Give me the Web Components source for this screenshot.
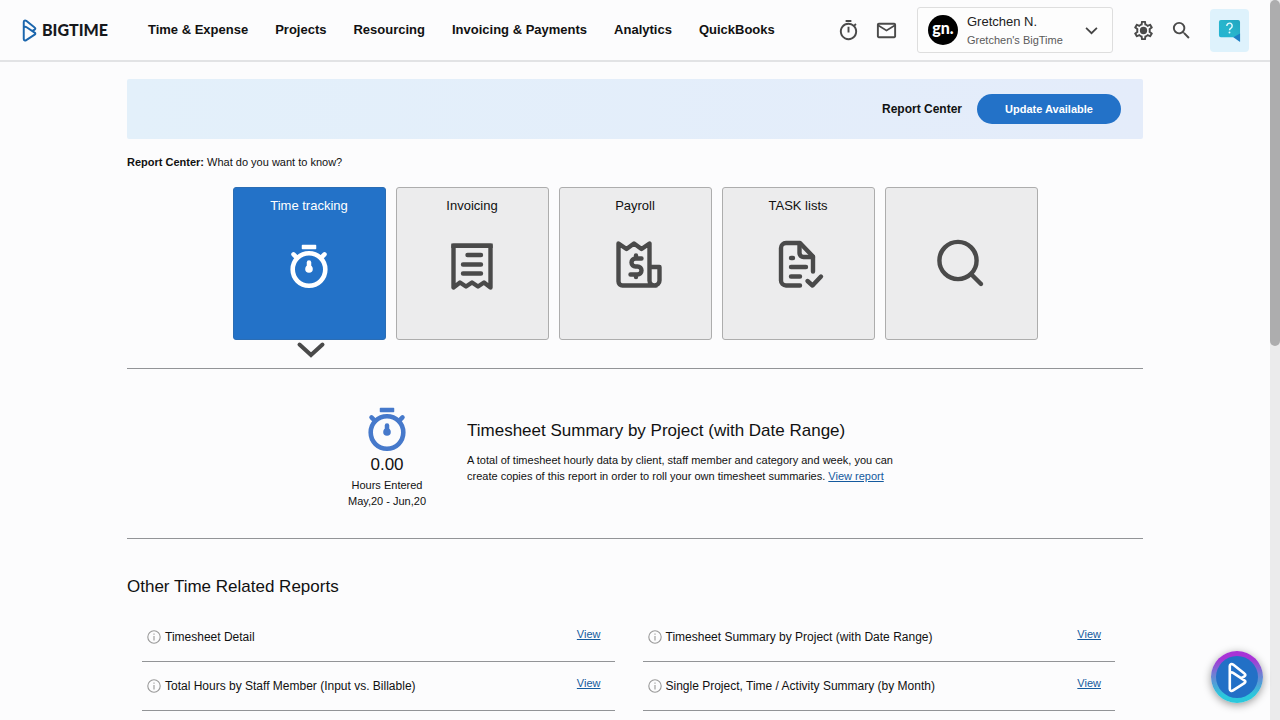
<!DOCTYPE html>
<html lang="en">
<head>
<meta charset="utf-8">
<meta name="viewport" content="width=device-width, initial-scale=1">
<title>BigTime – Report Center</title>
<style>
  body {
    margin: 0;
    font-family: "Liberation Sans", Arial, sans-serif;
    color: #111;
    background: #fcfcfd;
    --blue: #2372c8;
    --link: #145a9e;
    --ink: #4a4a4a;
    --rule: #929497;
  }
</style>
</head>
<body>
<bt-app></bt-app>
<script>
const ICONS = {
  timer: `<svg viewBox="0 0 24 24" fill="currentColor"><path d="M15 1H9v2h6V1zm-4 13h2V8h-2v6zm8.03-6.61 1.42-1.42c-.43-.51-.9-.99-1.41-1.41l-1.42 1.42A8.96 8.96 0 0 0 12 4a9 9 0 1 0 7.03 3.39zM12 20c-3.87 0-7-3.13-7-7s3.13-7 7-7 7 3.13 7 7-3.13 7-7 7z"/></svg>`,
  mail: `<svg viewBox="0 0 24 24" fill="currentColor"><path d="M20 4H4c-1.1 0-2 .9-2 2v12c0 1.1.9 2 2 2h16c1.1 0 2-.9 2-2V6c0-1.1-.9-2-2-2zm0 14H4V8l8 5 8-5v10zm-8-7L4 6h16l-8 5z"/></svg>`,
  gear: `<svg viewBox="0 0 24 24" fill="currentColor"><path d="M19.43 12.98c.04-.32.07-.64.07-.98s-.03-.66-.07-.98l2.11-1.65c.19-.15.24-.42.12-.64l-2-3.46c-.12-.22-.39-.3-.61-.22l-2.49 1c-.52-.4-1.08-.73-1.69-.98l-.38-2.65A.488.488 0 0 0 14 2h-4c-.25 0-.46.18-.49.42l-.38 2.65c-.61.25-1.17.59-1.69.98l-2.49-1c-.23-.09-.49 0-.61.22l-2 3.46c-.13.22-.07.49.12.64l2.11 1.65c-.04.32-.07.65-.07.98s.03.66.07.98l-2.11 1.65c-.19.15-.24.42-.12.64l2 3.46c.12.22.39.3.61.22l2.49-1c.52.4 1.08.73 1.69.98l.38 2.65c.03.24.24.42.49.42h4c.25 0 .46-.18.49-.42l.38-2.65c.61-.25 1.17-.59 1.69-.98l2.49 1c.23.09.49 0 .61-.22l2-3.46c.12-.22.07-.49-.12-.64l-2.11-1.65zm-1.98-1.71c.04.31.05.52.05.73s-.02.43-.05.73l-.14 1.13.89.7 1.08.84-.7 1.21-1.27-.51-1.04-.42-.9.68c-.43.32-.84.56-1.25.73l-1.06.43-.16 1.13-.2 1.35h-1.4l-.19-1.35-.16-1.13-1.06-.43c-.43-.18-.83-.41-1.23-.71l-.91-.7-1.06.43-1.27.51-.7-1.21 1.08-.84.89-.7-.14-1.13c-.03-.31-.05-.54-.05-.74s.02-.43.05-.73l.14-1.13-.89-.7-1.08-.84.7-1.21 1.27.51 1.04.42.9-.68c.43-.32.84-.56 1.25-.73l1.06-.43.16-1.13.2-1.35h1.39l.19 1.35.16 1.13 1.06.43c.43.18.83.41 1.23.71l.91.7 1.06-.43 1.27-.51.7 1.21-1.07.85-.89.7.14 1.13z"/><circle cx="12" cy="12" r="3.8"/></svg>`,
  find: `<svg viewBox="0 0 24 24" fill="currentColor"><path d="M15.5 14h-.79l-.28-.27A6.47 6.47 0 0 0 16 9.5 6.5 6.5 0 1 0 9.5 16c1.61 0 3.09-.59 4.23-1.57l.27.28v.79l5 4.99L20.49 19l-4.99-5zm-6 0C7.01 14 5 11.99 5 9.5S7.01 5 9.5 5 14 7.01 14 9.5 11.99 14 9.5 14z"/></svg>`,
  down: `<svg viewBox="0 0 12 12" fill="none" stroke="currentColor" stroke-width="1.6"><path d="M1 3.5 6 8.5l5-5"/></svg>`,
  help: `<svg viewBox="0 0 24 24"><defs><linearGradient id="h" x1="0" y1="1" x2="1" y2="0"><stop offset="0" stop-color="#20b3d4"/><stop offset=".5" stop-color="#28b5cc"/><stop offset="1" stop-color="#22a5c0"/></linearGradient></defs><path d="M3 1h18a2 2 0 0 1 2 2v20l-5-4H3a2 2 0 0 1-2-2V3a2 2 0 0 1 2-2z" fill="url(#h)"/><path d="M16 19l7-4v9z" fill="#1e7fc4"/><path d="M9.2 7.2a2.8 2.8 0 1 1 4.3 2.3c-1 .6-1.500 1-1.500 2.200" fill="none" stroke="#e8fbff" stroke-width="1.5"/><circle cx="12" cy="14" r="1" fill="#e8fbff"/></svg>`,
  stopwatch: `<svg viewBox="0 0 48 50" fill="none" stroke="currentColor" stroke-linecap="round"><circle cx="24" cy="31.5" r="16.3" stroke-width="4.6"/><path d="M17.500 7.500h13v3h-13z" fill="currentColor" stroke-width="1.500" stroke-linejoin="round"/><path d="m8.500 16.300 3.500 3.500M39.500 16.300 36 19.800" stroke-width="4.500"/><path d="M24 24.500v7" stroke-width="4.500"/><circle cx="24" cy="31" r="3.800" fill="currentColor" stroke="none"/></svg>`,
  invoice: `<svg viewBox="0 0 48 50" fill="none" stroke="currentColor" stroke-width="4.4" stroke-linecap="round" stroke-linejoin="round"><path d="M5.500 49.500V7.800h37v41.700l-6.500-5-6 4-6-4-6 4-6-4-6.500 5z"/><path d="M5.500 10V7.800h37V10" stroke-linejoin="miter" stroke-linecap="butt"/><path d="M19.500 17H33M15 26.500h18M15 35.500h18"/></svg>`,
  payroll: `<svg viewBox="-4 -2 48 50" fill="none" stroke="currentColor" stroke-width="4.4" stroke-linecap="round" stroke-linejoin="round"><path d="M41 45.500H7.500a4 4 0 0 1-4-4V3.500l8 5.500 7.500-5.500L26.500 9l8-5.500v37a5 5 0 0 0 5 5 5 5 0 0 0 5-5V27h-9"/><path d="M26.500 18.500h-6a4 4 0 0 0 0 8h2a4 4 0 0 1 0 8h-7M21 15.500v3M21 34.500V37"/></svg>`,
  tasks: `<svg viewBox="-3 -2 48 50" fill="none" stroke="currentColor" stroke-width="4.4" stroke-linecap="round" stroke-linejoin="round"><path d="M23 45.500H9a5 5 0 0 1-5-5V8a5 5 0 0 1 5-5h14l13 13.500v15"/><path d="M22.500 3.500v9.500a4 4 0 0 0 4 4h9.500"/><path d="M14 18h2M14 27h15M14 36.500h9M30.500 41l5 4.500 8.500-9"/></svg>`,
  search: `<svg viewBox="0 0 48 50" fill="none" stroke="currentColor" stroke-width="4.4" stroke-linecap="round"><circle cx="21" cy="22.5" r="18.6"/><path d="M34.500 36.500 44 46"/></svg>`,
  arrow: `<svg viewBox="0 0 28 16" fill="none" stroke="currentColor" stroke-width="4" stroke-linecap="round"><path d="M2.500 2.500 14 13 25.500 2.500"/></svg>`,
  info: `<svg viewBox="0 0 14 14" fill="none" stroke="currentColor" stroke-width="1.1"><circle cx="7" cy="7" r="6.2"/><path d="M7 6v4.500M7 3.500v1.300"/></svg>`,
  mark: `<svg viewBox="0 0 16 26" fill="none" stroke="currentColor" stroke-width="2.2" stroke-linejoin="round"><path d="M11 13.700l2.800-1.700c1.100-.7 1.100-1.600 0-2.400L4.300 2.100C3 1.200 1.500 1.800 1.500 3.300V22.700c0 1.500 1.500 2.100 2.800 1.200l9.500-6.200c1.100-.7 1.100-1.600 0-2.300L4.300 9.100C3 8.300 1.500 8.800 1.500 10.500"/></svg>`
};

function define(name, css, html) {
  customElements.define(name, class extends HTMLElement {
    constructor() {
      super();
      const root = this.attachShadow({ mode: "open" });
      const body = typeof html === "function" ? html(this) : html;
      root.innerHTML = `<style>*{box-sizing:border-box}${css}</style>${body}`;
    }
  });
}

define("bt-icon", `
  :host { display: block; flex: none; }
  svg { display: block; width: 100%; height: 100%; overflow: visible; }
`, el => ICONS[el.getAttribute("name")]);

define("bt-logo", `
  :host { display: block; }
  a { display: flex; align-items: center; gap: 5px; color: #16181c; text-decoration: none; font: 900 16px/24px Lato, sans-serif; }
  bt-icon { width: 15px; height: 23px; color: #1b66ad; }
`, `<a href="#"><bt-icon name="mark"></bt-icon><span>BIGTIME</span></a>`);

define("bt-nav", `
  :host { display: block; flex: 1; }
  nav { display: flex; gap: 27px; }
  a { color: #111; font-size: 13px; font-weight: 700; line-height: 20px; text-decoration: none; white-space: nowrap; }
`, `<nav aria-label="Main">
  <a href="#">Time &amp; Expense</a><a href="#">Projects</a><a href="#">Resourcing</a>
  <a href="#">Invoicing &amp; Payments</a><a href="#">Analytics</a><a href="#">QuickBooks</a>
</nav>`);

define("bt-tool", `
  :host { display: block; flex: none; }
  button { display: block; padding: 0; border: 0; background: none; color: var(--ink); }
  bt-icon { width: 23px; height: 23px; }
  :host([kind="help"]) button { padding: 10px 8px; border-radius: 4px; background: #def2fc; }
`, el => `<button type="button" aria-label="${el.getAttribute("label")}"><bt-icon name="${el.getAttribute("icon")}"></bt-icon></button>`);

define("bt-account", `
  :host { display: block; flex: none; width: 196px; }
  button { display: flex; align-items: center; gap: 9px; width: 100%; height: 46px; padding: 0 14px 0 10px; border: 1px solid #dedede; border-radius: 3px; background: #fdfdfd; text-align: left; font: inherit; color: #222; }
  .avatar { flex: none; width: 30px; height: 30px; border-radius: 50%; background: #000; color: #fff; text-align: center; font: 900 16px/26px Lato, sans-serif; }
  .who { flex: 1; display: grid; padding-top: 2px; }
  .name { font-size: 13px; line-height: 19px; }
  .firm { font-size: 11px; line-height: 19px; color: #5a5a5a; }
  bt-icon { width: 13px; height: 13px; color: #444; }
`, `<button type="button"><span class="avatar">gn.</span><span class="who"><span class="name"><slot name="name"></slot></span><span class="firm"><slot name="firm"></slot></span></span><bt-icon name="down"></bt-icon></button>`);

define("bt-header", `
  :host { display: block; }
  header { display: flex; align-items: center; height: 62px; padding: 0 21px 0 22px; border-bottom: 2px solid #e2e3e5; }
  bt-nav { margin-left: 40px; }
  .tools { display: flex; align-items: center; gap: 15px; }
  .tools bt-account { margin: 0 4px; }
  .tools [kind="help"] { margin-left: 2px; }
`, `<header>
  <bt-logo></bt-logo>
  <bt-nav></bt-nav>
  <div class="tools">
    <bt-tool icon="timer" label="Timer"></bt-tool>
    <bt-tool icon="mail" label="Messages"></bt-tool>
    <bt-account><span slot="name">Gretchen N.</span><span slot="firm">Gretchen's BigTime</span></bt-account>
    <bt-tool icon="gear" label="Settings"></bt-tool>
    <bt-tool icon="find" label="Search"></bt-tool>
    <bt-tool kind="help" icon="help" label="Help"></bt-tool>
  </div>
</header>`);

define("bt-banner", `
  :host { display: flex; align-items: center; justify-content: flex-end; gap: 15px; height: 60px; padding: 0 22px; border-radius: 2px; background: linear-gradient(90deg, #e3f0fa, #e4ecfa); }
  strong { font-size: 12px; line-height: 16px; }
  button { width: 144px; height: 30px; border: 0; border-radius: 15px; background: var(--blue); color: #fff; font: 700 11px/16px "Liberation Sans", Arial, sans-serif; }
`, `<strong>Report Center</strong><button type="button">Update Available</button>`);

define("bt-card", `
  :host { display: block; }
  button { display: flex; flex-direction: column; align-items: center; gap: 24px; width: 100%; aspect-ratio: 1; padding: 10px 0; border: 1px solid #adadad; border-radius: 3px; background: #ececed; color: #111; font: 13px/16px "Liberation Sans", Arial, sans-serif; }
  .label { min-height: 16px; }
  bt-icon { width: 48px; height: 50px; color: var(--ink); }
  :host([selected]) button { border-color: #2b6db4; background: var(--blue); color: #fff; }
  :host([selected]) bt-icon { color: #fff; }
`, el => `<button type="button" aria-label="${el.getAttribute("label")}"><span class="label"><slot></slot></span><bt-icon name="${el.getAttribute("icon")}"></bt-icon></button>`);

define("bt-picker", `
  :host { display: grid; grid-template-columns: repeat(5, 1fr); column-gap: 10px; max-width: 805px; margin: 0 auto; }
  .pointer { display: flex; justify-content: center; height: 28px; padding: 2px 0 0 4px; }
  .pointer bt-icon { width: 28px; height: 16px; color: var(--ink); }
`, `
  <bt-card selected icon="stopwatch" label="Time tracking">Time tracking</bt-card>
  <bt-card icon="invoice" label="Invoicing">Invoicing</bt-card>
  <bt-card icon="payroll" label="Payroll">Payroll</bt-card>
  <bt-card icon="tasks" label="TASK lists">TASK lists</bt-card>
  <bt-card icon="search" label="Search reports"></bt-card>
  <div class="pointer"><bt-icon name="arrow"></bt-icon></div>`);

define("bt-feature", `
  :host { display: grid; grid-template-columns: 160px minmax(0, 440px); padding: 32px 0 29px 180px; border: solid var(--rule); border-width: 1px 0; }
  .stat { display: flex; flex-direction: column; align-items: center; font-size: 11px; line-height: 16px; }
  .stat bt-icon { width: 48px; height: 50px; margin-bottom: 2px; color: #4679cb; }
  .stat b { font-size: 17px; line-height: 24px; font-weight: 400; }
  h2 { margin: 20px 0 11px; font-size: 17px; line-height: 20px; font-weight: 400; }
  p { margin: 0; font-size: 11px; line-height: 16px; }
  a { color: var(--link); }
`, `
  <div class="stat"><bt-icon name="stopwatch"></bt-icon><b>0.00</b><span>Hours Entered</span><span>May,20 - Jun,20</span></div>
  <div>
    <h2>Timesheet Summary by Project (with Date Range)</h2>
    <p>A total of timesheet hourly data by client, staff member and category and week, you can <br>create copies of this report in order to roll your own timesheet summaries. <a href="#">View report</a></p>
  </div>`);

define("bt-report", `
  :host { display: flex; align-items: center; gap: 4px; height: 49px; padding: 0 14px 0 5px; border-bottom: 1px solid var(--rule); font-size: 12px; line-height: 16px; }
  bt-icon { width: 14px; height: 14px; color: #999; }
  .name { flex: 1; }
  a { padding-bottom: 6px; color: var(--link); font-size: 11px; }
`, `<bt-icon name="info"></bt-icon><span class="name"><slot></slot></span><a href="#">View</a>`);

define("bt-report-list", `
  :host { display: block; }
  h2 { margin: 0; font-size: 17px; line-height: 20px; font-weight: 400; }
  div { display: grid; grid-template-columns: 1fr 1fr; column-gap: 28px; padding: 16px 28px 0 15px; }
`, `<h2>Other Time Related Reports</h2><div><slot></slot></div>`);

define("bt-scrollbar", `
  :host { display: block; width: 10px; background: #ebebec; }
  i { display: block; height: 48%; border-radius: 5px; background: #adadae; }
`, `<i></i>`);

define("bt-chat", `
  :host { position: fixed; right: 17px; bottom: 17px; }
  button { display: grid; place-items: center; width: 52px; height: 52px; padding: 0; border: 5px solid transparent; border-radius: 50%; color: #fff; background: linear-gradient(#2270c6, #2270c6) padding-box, linear-gradient(#a834d6 15%, #6f7fd3 45%, #2bc8dc 85%) border-box; box-shadow: 0 2px 8px rgba(0, 0, 0, .4); }
  bt-icon { width: 19px; height: 31px; }
`, `<button type="button" aria-label="Open assistant"><bt-icon name="mark"></bt-icon></button>`);

define("bt-app", `
  :host { display: flex; min-height: 100vh; }
  .page { flex: 1; min-width: 0; }
  main { width: 80%; margin: 0 auto; padding-top: 17px; }
  .ask { margin: 15px 0 17px; font-size: 11px; line-height: 16px; }
  bt-report-list { margin-top: 38px; }
`, `
  <div class="page">
    <bt-header></bt-header>
    <main>
      <bt-banner></bt-banner>
      <p class="ask"><b>Report Center:</b> What do you want to know?</p>
      <bt-picker></bt-picker>
      <bt-feature></bt-feature>
      <bt-report-list>
        <bt-report>Timesheet Detail</bt-report>
        <bt-report>Timesheet Summary by Project (with Date Range)</bt-report>
        <bt-report>Total Hours by Staff Member (Input vs. Billable)</bt-report>
        <bt-report>Single Project, Time / Activity Summary (by Month)</bt-report>
      </bt-report-list>
    </main>
  </div>
  <bt-scrollbar></bt-scrollbar>
  <bt-chat></bt-chat>`);
</script>
</body>
</html>
